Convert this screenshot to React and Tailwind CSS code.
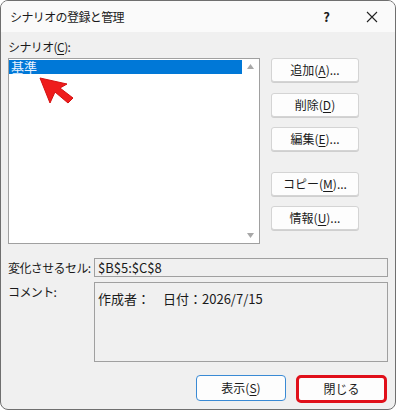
const font = { fontFamily: '"Noto Sans CJK JP", "Noto Sans", sans-serif' }

function Btn({ children, className = '' }) {
  return (
    <button
      type="button"
      className={`flex h-6 w-[88px] items-center justify-center rounded-[3px] border border-[#d4d4d4] bg-[#fdfdfd] text-[12px] text-[#1a1a1a] shadow-[0_1px_0_#cfcfcf] ${className}`}
    >
      {children}
    </button>
  )
}

function U({ children }) {
  return <span className="underline underline-offset-2">{children}</span>
}

export default function App() {
  return (
    <div className="h-[410px] w-[396px] bg-white" style={font}>
      <div className="flex h-[410px] w-[396px] flex-col overflow-hidden rounded-[8px] border border-[#6f6f6f] bg-[#f0f0f0]">
        <div className="flex h-[31px] shrink-0 items-center bg-[#fafafa] pl-[9px] pr-[14px] text-[12px] text-[#1a1a1a]">
          <span className="flex-1 tracking-[-0.6px]">シナリオの登録と管理</span>
          <span className="mr-[36px] text-[13px] font-semibold">?</span>
          <svg width="12" height="12" viewBox="0 0 12 12" className="mr-[3px]">
            <path d="M1 1L11 11M11 1L1 11" stroke="#222" strokeWidth="1.1" />
          </svg>
        </div>

        <div className="relative flex flex-col px-[7px] pt-[6px] text-[12px] text-[#1a1a1a]">
          <div className="h-[20px] leading-[18px] tracking-[-0.6px]">
            シナリオ(<U>C</U>):
          </div>
          <div className="flex gap-[11px]">
            <div className="flex h-[186px] w-[252px] border border-[#a0a0a0] bg-white">
              <div className="flex-1 pt-[1px]">
                <div className="h-[14px] bg-[#0078d7] pl-[2px] text-[13px] leading-[14px] text-[#e8f2ff]">
                  基準
                </div>
              </div>
              <div className="flex w-[17px] flex-col items-center justify-between py-[5px]">
                <svg width="7" height="5" viewBox="0 0 7 5">
                  <path d="M0 5L3.5 0L7 5Z" fill="#a8a8a8" />
                </svg>
                <svg width="7" height="5" viewBox="0 0 7 5">
                  <path d="M0 0L3.5 5L7 0Z" fill="#a8a8a8" />
                </svg>
              </div>
            </div>
            <div className="flex flex-col">
              <Btn>
                追加(<U>A</U>)...
              </Btn>
              <Btn className="mt-[11px]">
                削除(<U>D</U>)
              </Btn>
              <Btn className="mt-[10px]">
                編集(<U>E</U>)...
              </Btn>
              <Btn className="mt-[21px]">
                コピー(<U>M</U>)...
              </Btn>
              <Btn className="mt-[10px]">
                情報(<U>U</U>)...
              </Btn>
            </div>
          </div>

          <div className="mt-[14px] flex items-center">
            <span className="w-[86px] tracking-[-0.6px]">変化させるセル:</span>
            <div className="flex h-[19px] w-[294px] items-center border border-[#a0a0a0] bg-[#f0f0f0] pl-[3px] text-[13px]">
              $B$5:$C$8
            </div>
          </div>
          <div className="mt-[5px] flex">
            <span className="w-[86px] pt-[1px] tracking-[-0.6px]">コメント:</span>
            <div className="h-[80px] w-[294px] border border-[#a0a0a0] bg-[#f0f0f0] pl-[3px] pt-[6px] text-[13px]">
              作成者：　日付：2026/7/15
            </div>
          </div>

          <div className="mt-[13px] flex justify-end gap-[10px] pr-[1px]">
            <button
              type="button"
              className="flex h-[26px] w-[90px] items-center justify-center rounded-[4px] border border-[#3a8ad4] bg-[#fdfdfd] text-[12px] text-[#1a1a1a]"
            >
              表示(<U>S</U>)
            </button>
            <div className="flex h-[28px] w-[91px] items-center justify-center rounded-[5px] border-[3px] border-[#e0101a] bg-[#fdfdfd] text-[12px] text-[#1a1a1a]">
              閉じる
            </div>
          </div>

          <svg
            width="40"
            height="32"
            viewBox="0 0 40 32"
            className="pointer-events-none absolute left-[36px] top-[44px]"
          >
            <path
              d="M3 2L30 8L23 12L36 22L31 27L18 16L13 27Z"
              fill="#ee1c1c"
              stroke="#d41010"
              strokeWidth="1"
              strokeLinejoin="round"
            />
          </svg>
        </div>
      </div>
    </div>
  )
}
